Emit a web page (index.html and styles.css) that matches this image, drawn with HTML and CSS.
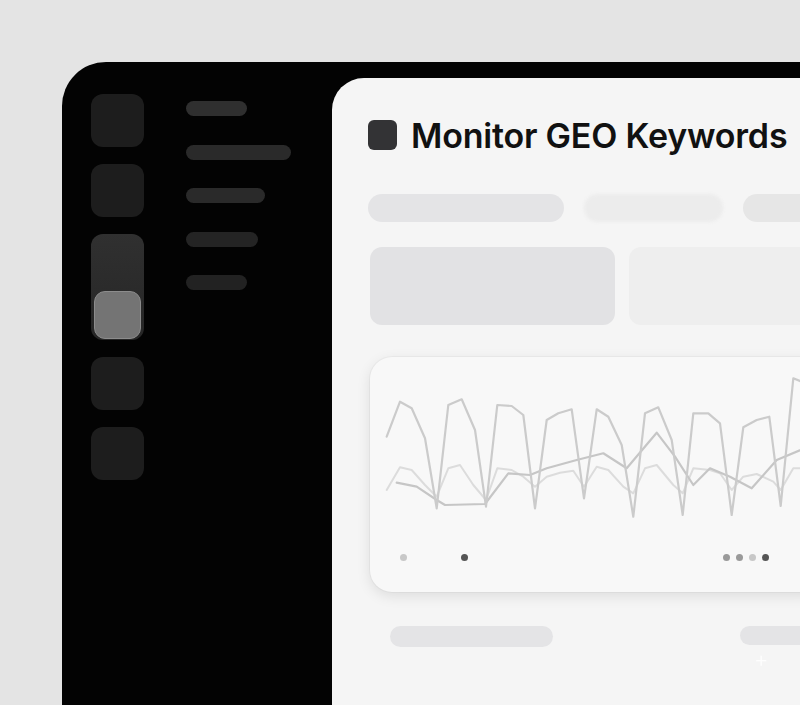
FILE: index.html
```html
<!DOCTYPE html>
<html lang="en">
<head>
<meta charset="utf-8">
<title>Monitor GEO Keywords</title>
<link rel="stylesheet" href="styles.css">
</head>
<body>
<div class="frame">
  <aside class="sidebar">
    <div class="icons">
      <div class="ico"></div>
      <div class="ico"></div>
      <div class="ico tall"><div class="knob"></div></div>
      <div class="ico"></div>
      <div class="ico"></div>
    </div>
    <div class="bars">
      <div class="bar w1"></div>
      <div class="bar w2"></div>
      <div class="bar w3"></div>
      <div class="bar w4"></div>
      <div class="bar w5"></div>
    </div>
  </aside>
  <main class="panel">
    <h1 class="title"><span class="title-icon"></span>Monitor GEO Keywords</h1>
    <div class="pills">
      <div class="pill p1"></div>
      <div class="pill p2"></div>
      <div class="pill p3"></div>
    </div>
    <div class="cards">
      <div class="card c1"></div>
      <div class="card c2"></div>
    </div>
    <section class="chart">
      <svg class="lines" width="460" height="235" viewBox="370 357 460 235">
        <polyline class="l3" points="386.7,490 400,467.3 411.7,470 425,485 436.7,496.7 448.3,468.3 460,465 473.3,485 486,500 497.3,468.3 511.7,470 523.3,476.7 535,486.7 546.7,476.7 560,472.7 573.3,470.7 584,486.7 596.7,466.7 608.3,470 623.3,486.7 633.3,493.3 645,468.3 656.7,465 673.3,485 682.7,493.3 693.3,468.3 710,470 720,473.3 731.7,490 743.3,476.7 756.7,474 773.3,481.7 780.7,490 793.3,468.3 810,468.3"/>
        <polyline class="l2" points="396.7,482.7 416.7,486.7 436.7,500 445,505 485,504 508.3,473.3 530,475 546.7,468.3 576.7,460 603.3,453.3 626.7,468.3 656.7,432.7 675,456.7 693.3,485 710,468.3 730,476.7 751.7,488.3 776.7,460 810,446"/>
        <polyline class="l1" points="386.7,436.7 400,401.7 411.7,408.3 425,438.3 436.7,508.3 448.3,405 461.7,399.3 475,430 486,506.7 497.3,405 511.7,406 523.3,415 535,508.3 546.7,420 558.3,413.3 571.7,409.3 584,498.3 596.7,409.3 608.3,416.7 621.7,445 633.3,516.7 645,413.3 658.3,407.3 671.7,440 682.7,515 693.3,413.3 708.3,413.3 720,423.3 731.7,515 743.3,427.3 756.7,420 769.3,416.7 780.7,506 793.3,378.3 805,383"/>
      </svg>
      <div class="dots">
        <div class="left-dots">
          <span class="dot light"></span>
          <span class="dot dark"></span>
        </div>
        <div class="right-dots">
          <span class="dot mid"></span>
          <span class="dot mid"></span>
          <span class="dot light"></span>
          <span class="dot dark"></span>
        </div>
      </div>
    </section>
    <div class="footer-row">
      <div class="fpill f1"></div>
      <div class="fpill f2"></div>
    </div>
    <span class="sparkle">+</span>
  </main>
</div>
</body>
</html>
```

FILE: styles.css
```css
* { box-sizing: border-box; }

html, body {
  margin: 0;
  padding: 0;
  width: 800px;
  height: 705px;
  overflow: hidden;
  background: #e4e4e4;
  font-family: Inter, "Noto Sans", "Liberation Sans", sans-serif;
}

.frame {
  margin: 62px 0 0 62px;
  width: 738px;
  height: 643px;
  background: #030303;
  border-top-left-radius: 44px;
  display: flex;
  padding-top: 16px;
  overflow: hidden;
}

.sidebar {
  width: 270px;
  flex: none;
  display: flex;
  gap: 42px;
  padding: 16px 0 0 29px;
}

.icons {
  display: flex;
  flex-direction: column;
  gap: 17px;
}

.ico {
  width: 53px;
  height: 53px;
  border-radius: 12px;
  background: #1d1d1d;
}

.ico.tall {
  height: 106px;
  background: linear-gradient(#303030, #262626);
  display: flex;
  align-items: flex-end;
  justify-content: center;
  padding: 0 3px 1px;
}

.knob {
  width: 47px;
  height: 48px;
  border-radius: 11px;
  background: #747474;
  border: 1px solid #8c8c8c;
}

.bars {
  display: flex;
  flex-direction: column;
  gap: 28.5px;
  padding-top: 7px;
}

.bar {
  height: 15px;
  border-radius: 8px;
  background: #2a2a2a;
}
.bar.w1 { width: 61px; background: #2f2f2f; }
.bar.w2 { width: 105px; }
.bar.w3 { width: 79px; }
.bar.w4 { width: 72px; background: #242424; }
.bar.w5 { width: 61px; background: #222; }

.panel {
  position: relative;
  flex: 1;
  min-width: 0;
  background: #f5f5f5;
  border-top-left-radius: 32px;
  padding: 42px 0 0 36px;
  overflow: hidden;
}

.title {
  margin: 0;
  display: flex;
  align-items: center;
  gap: 14px;
  font-size: 34px;
  font-weight: 600;
  color: #111;
  letter-spacing: -0.2px;
  height: 30px;
  white-space: nowrap;
}

.title-icon {
  width: 29px;
  height: 30px;
  border-radius: 6px;
  background: #333335;
  flex: none;
}

.pills {
  display: flex;
  gap: 20px;
  margin-top: 44px;
}

.pill {
  height: 28px;
  border-radius: 14px;
  flex: none;
}
.pill.p1 { width: 196px; background: #e4e4e6; }
.pill.p2 { width: 139px; background: #ececec; filter: blur(1.5px); }
.pill.p3 { width: 120px; background: #e6e6e6; }

.cards {
  display: flex;
  gap: 14px;
  margin: 25px 0 0 2px;
}

.card {
  height: 78px;
  border-radius: 12px;
  flex: none;
}
.card.c1 { width: 245px; background: #e2e2e4; }
.card.c2 { width: 220px; background: #eeeeee; }

.chart {
  margin: 32px 0 0 2px;
  width: 460px;
  height: 235px;
  border-radius: 22px;
  background: #f8f8f8;
  box-shadow: 0 4px 14px rgba(0,0,0,0.10), 0 0 0 1px rgba(0,0,0,0.03);
  position: relative;
  display: flex;
  flex-direction: column;
  justify-content: flex-end;
  padding: 0 0 31px 30px;
}

.lines {
  position: absolute;
  left: 0;
  top: 0;
  fill: none;
  stroke-linejoin: round;
  stroke-linecap: round;
}
.l1 { stroke: #cbcbcb; stroke-width: 2.2; }
.l2 { stroke: #c6c6c6; stroke-width: 2.2; }
.l3 { stroke: #dcdcdc; stroke-width: 2; }

.dots {
  display: flex;
  align-items: center;
  width: 369px;
  justify-content: space-between;
}

.left-dots {
  display: flex;
  align-items: center;
  gap: 54px;
}

.right-dots {
  display: flex;
  align-items: center;
  gap: 6px;
}

.dot {
  width: 7px;
  height: 7px;
  border-radius: 50%;
  display: block;
}
.dot.light { background: #c8c8c8; }
.dot.mid { background: #9a9a9a; }
.dot.dark { background: #555; }

.footer-row {
  display: flex;
  gap: 187px;
  margin: 34px 0 0 22px;
  align-items: flex-start;
}

.fpill {
  height: 21px;
  border-radius: 11px;
  background: #e4e4e6;
  flex: none;
}
.f1 { width: 163px; }
.f2 { width: 80px; height: 19px; border-radius: 10px; }

.sparkle {
  position: absolute;
  left: 422px;
  top: 570px;
  color: #ffffff;
  font-size: 22px;
  font-weight: 300;
  line-height: 1;
  opacity: 0.9;
}
```
